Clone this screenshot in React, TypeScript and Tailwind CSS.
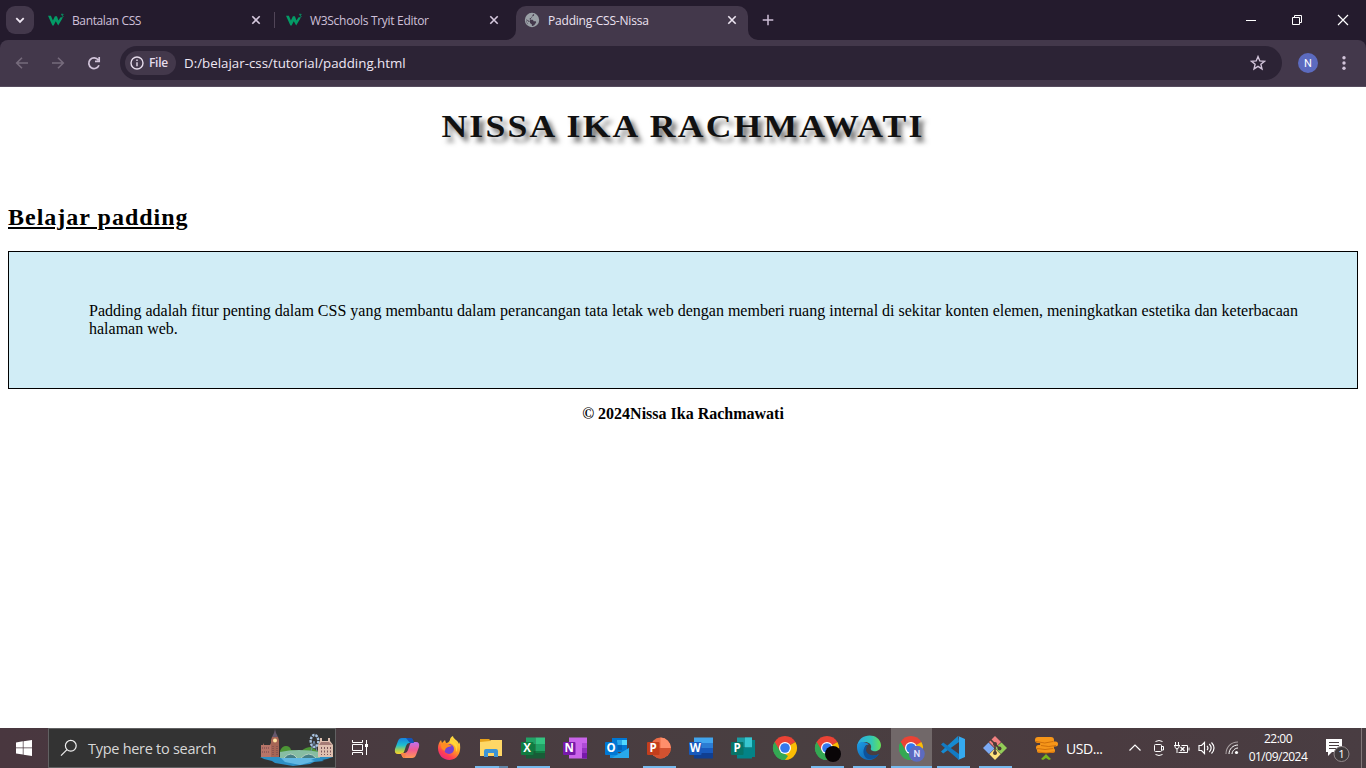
import React from "react";

function W3Icon() {
  return (
    <svg width="16" height="16" viewBox="0 0 16 16" className="shrink-0">
      <path d="M0 3.8h2.9l2 4.6 2-4.1 2 0 1.6 4.2 2-3.2 2 1-4.3 7.2-2.4-4.2-2.2 4.2H4.4z" fill="#049b66" />
      <path d="M13 2.3h2.2l-1.2 1.3c1.7.1 1.6 2.2-.8 1.9" fill="none" stroke="#049b66" strokeWidth=".9" />
    </svg>
  );
}

function Cross({ color }: { color: string }) {
  return (
    <svg width="16" height="16" viewBox="0 0 16 16" className="shrink-0">
      <path d="M4.3 4.3 11.7 11.7M11.7 4.3 4.3 11.7" stroke={color} strokeWidth="1.6" />
    </svg>
  );
}

function TabStrip() {
  return (
    <div className="flex h-10 w-full bg-[#241b2d] pl-1.5">
      <div className="mt-1.5 flex size-7 shrink-0 items-center justify-center rounded-[9px] bg-[#43384b]">
        <svg width="12" height="12" viewBox="0 0 12 12"><path d="m2.3 4.2 3.7 3.7 3.7-3.7" fill="none" stroke="#f0e8f4" strokeWidth="1.8" /></svg>
      </div>
      <div className="flex w-[240px] shrink-0 items-center pl-[14px] pr-[10px]">
        <W3Icon />
        <span className="ml-2 flex-1 pt-0.5 whitespace-nowrap text-[12px] tracking-[-0.38px] text-[#cfc0d9]">Bantalan CSS</span>
        <Cross color="#d6c9de" />
      </div>
      <div className="mt-3 h-4 w-px bg-[#514558]" />
      <div className="flex w-[238px] shrink-0 items-center pl-[11px] pr-[11px]">
        <W3Icon />
        <span className="ml-2 flex-1 pt-0.5 whitespace-nowrap text-[12px] tracking-[-0.3px] text-[#cfc0d9]">W3Schools Tryit Editor</span>
        <Cross color="#d6c9de" />
      </div>
      <div className="relative ml-[3px] mt-1.5 flex h-[34px] w-[232px] shrink-0 items-center rounded-t-[10px] bg-[#43384b] pb-[6px] pl-2 pr-2">
        <svg className="absolute -left-[10px] bottom-0" width="10" height="10"><path d="M10 0v10H0A10 10 0 0 0 10 0" fill="#43384b" /></svg>
        <svg className="absolute -right-[10px] bottom-0" width="10" height="10"><path d="M0 0v10h10A10 10 0 0 1 0 0" fill="#43384b" /></svg>
        <svg width="16" height="16" viewBox="0 0 16 16" className="shrink-0">
          <circle cx="8" cy="8" r="7.2" fill="#9aa0a6" />
          <path d="M9.2 2.1q1.700.6.6 1.7l-1.700.7-.2 1.600H5.800v1.600h2.700q1 0 1 1.600h1.600q1.200-.2 1 1.200l-1.700 2.400q-1.500 1.300-2.500 1.100v-1.500L6 11V9.600L2.200 7.200q-.4 3 1.800 5" fill="#43384b" />
          <path d="M2.3 7.5q0 4 3.6 5.4V11z" fill="#9aa0a6" />
        </svg>
        <span className="ml-2 flex-1 pt-0.5 whitespace-nowrap text-[12px] tracking-[-0.2px] text-[#ebe1f0]">Padding-CSS-Nissa</span>
        <Cross color="#ede5f1" />
      </div>
      <svg width="16" height="16" viewBox="0 0 16 16" className="ml-3 mt-3"><path d="M8 2.7v10.6M2.7 8h10.6" stroke="#cdbfd6" strokeWidth="1.5" /></svg>
      <div className="ml-auto flex h-10 items-center">
        <div className="flex w-[46px] justify-center"><svg width="12" height="12"><path d="M1 6.5h10" stroke="#fff" /></svg></div>
        <div className="flex w-[46px] justify-center"><svg width="12" height="12"><path d="M1.5 3.5h7v7h-7zM3.5 3.5v-2h7v7h-2" fill="none" stroke="#fff" /></svg></div>
        <div className="flex w-[46px] justify-center"><svg width="12" height="12"><path d="m1 1 10 10M11 1 1 11" stroke="#fff" strokeWidth="1.2" /></svg></div>
      </div>
    </div>
  );
}

function Toolbar() {
  return (
    <div className="w-full bg-[#241b2d]">
      <div className="flex h-[47px] items-center rounded-t-[8px] border-b border-[#564c5e] bg-[#43384b] pl-[14px]">
        <svg width="16" height="16" viewBox="0 0 16 16"><path d="M14 8H3M8 2.7 2.7 8 8 13.3" fill="none" stroke="#766b7c" strokeWidth="1.6" /></svg>
        <svg width="16" height="16" viewBox="0 0 16 16" className="ml-5"><path d="M2 8h11M8 2.7 13.3 8 8 13.3" fill="none" stroke="#766b7c" strokeWidth="1.6" /></svg>
        <svg width="16" height="16" viewBox="0 0 16 16" className="ml-5"><path d="M13 10.2A5.3 5.3 0 1 1 12.3 5M13.2 2v4.3H9" fill="none" stroke="#d2c4da" strokeWidth="1.7" /></svg>
        <div className="ml-[18px] flex h-[34px] w-[1162px] items-center rounded-full bg-[#2c2335] pl-[5px] pr-4">
          <div className="flex h-6 w-[51px] items-center rounded-full bg-[#43384b] pl-[5px]">
            <svg width="14" height="14" viewBox="0 0 14 14"><circle cx="7" cy="7" r="6" fill="none" stroke="#e6dceb" strokeWidth="1.4" /><path d="M7 6.2v4M7 3.5v1.5" stroke="#e6dceb" strokeWidth="1.4" /></svg>
            <span className="ml-[5px] text-[12px] font-semibold tracking-[-0.3px] text-[#e6dceb]">File</span>
          </div>
          <span className="ml-2 flex-1 pt-px whitespace-nowrap text-[13.3px] tracking-[0.01px] text-[#efe7f4]">D:/belajar-css/tutorial/padding.html</span>
          <svg width="16" height="16" viewBox="0 0 16 16"><path d="m8 1.6 1.8 4.3 4.7.4-3.6 3 1.1 4.6L8 11.4l-4 2.5 1.1-4.6-3.6-3 4.7-.4z" fill="none" stroke="#d2c4da" strokeWidth="1.4" /></svg>
        </div>
        <div className="ml-4 flex size-5 items-center justify-center rounded-full bg-[#5c6bc0] pt-px font-['Roboto'] text-[11px] leading-none font-normal text-white">N</div>
        <svg width="16" height="16" viewBox="0 0 16 16" className="ml-[18px]" fill="#d2c4da"><circle cx="8" cy="2.8" r="1.7" /><circle cx="8" cy="8" r="1.7" /><circle cx="8" cy="13.2" r="1.7" /></svg>
      </div>
    </div>
  );
}

function Page() {
  return (
    <main className="flex h-[641px] flex-col bg-white px-2 font-['Liberation_Serif',serif] text-black">
      <h1 className="mt-[21px] scale-x-[1.113] text-center text-[32px] leading-[37px] font-bold tracking-[2px] whitespace-nowrap text-[#111] [text-shadow:4px_5px_5px_#707070]">NISSA IKA RACHMAWATI</h1>
      <h2 className="mt-[59px] text-[24px] leading-[27px] font-bold tracking-[1px] underline">Belajar padding</h2>
      <p className="mt-5 h-[138px] border border-black bg-[#d1edf6] pt-[50px] pr-[50px] pb-[50px] pl-[80px] text-[16px] leading-[18px]">
        Padding adalah fitur penting dalam CSS yang membantu dalam perancangan tata letak web dengan memberi ruang internal di sekitar konten elemen, meningkatkan estetika dan keterbacaan halaman web.
      </p>
      <p className="mt-4 text-center text-[16px] leading-[18px] font-bold">© 2024Nissa Ika Rachmawati</p>
    </main>
  );
}

function LondonArt() {
  return (
    <svg width="74" height="38" viewBox="0 0 74 38" className="mr-px shrink-0">
      <path d="M0 28h73l-6 2-5 1 2 1-10 1-4 2-17 2-18-3-3-2-8-2z" fill="#2c8fc5" />
      <path d="M20 28h38l-7 3 4 1-15 4-15-3z" fill="#62b8e3" />
      <path d="M20 22q2-5 6-5t5 4l10 1q5-4 10-4l7 4v6H20z" fill="#4c9535" />
      <path d="M20 23q18-4 40 0v6H20z" fill="#87bda3" />
      <path d="M24 29q7-8 13 0M41 29q8-8 15 0" fill="#467f85" stroke="#b5d1c1" />
      <path d="M1 16h2v-2l1 2h6v-2l1 2h3v12H1z" fill="#b77568" />
      <path d="M11 11l1-3h6l1 3v17h-8z" fill="#a66555" />
      <path d="M12 8l2-4 1-4 1 4 2 4z" fill="#66586d" />
      <path d="M2 19h8M2 23h8M13 17v9M17 17v9" stroke="#71444c" strokeDasharray="1 1" />
      <circle cx="15" cy="11.5" r="2" fill="#ffe3a1" />
      <ellipse cx="54.5" cy="12" rx="3.8" ry="6" fill="none" stroke="#a8c4e1" strokeWidth="2.4" strokeDasharray="2.4 1" />
      <path d="M54 12l-3 10M54 12l3 10" stroke="#708baa" />
      <path d="M58 16l2-4h10l3 4v12H58z" fill="#dec0b0" />
      <path d="M59 16h13l-3-3h-8z" fill="#a47c76" />
      <path d="M61.500 18v8M64.500 18v8M67.500 18v8M70.500 18v8" stroke="#7c575b" strokeDasharray="2 1.5" />
      <path d="M61 13v-4M69 13v-4" stroke="#dec0b0" strokeWidth="2" />
    </svg>
  );
}

function OfficeIcon({ letter, dark, colors }: { letter: string; dark: string; colors: string[] }) {
  return (
    <svg width="24" height="24" viewBox="0 0 24 24">
      {letter === "P" && dark === "#c43e1c" ? (
        <g><circle cx="13.5" cy="12" r="10.4" fill={colors[0]} /><path d="M13.5 1.6A10.4 10.4 0 0 1 23.9 12H13.5z" fill={colors[1]} /><path d="M3.1 12h20.8a10.4 10.4 0 0 1-20.8 0" fill={colors[2]} /></g>
      ) : letter === "O" ? (
        <g><path d="M7 2h15v14H7z" fill={colors[0]} /><path d="M12 4h5v5h-5z" fill={colors[1]} /><path d="M17 4h5v5h-5z" fill="#50d9ff" /><path d="M12 9h5v5h-5z" fill="#0364b8" /><path d="m5 12 9.5 5.5L24 12v10H5z" fill={colors[2]} /><path d="m24 12-17 10h17z" fill="#28a8ea" /></g>
      ) : letter === "N" ? (
        <g><path d="M6 1.5h18v21H6z" fill={colors[0]} /><path d="M19 7h5v5h-5z" fill={colors[1]} /><path d="M19 12h5v5h-5z" fill={colors[2]} /><path d="M19 17h5v5.5h-5z" fill="#7719aa" /></g>
      ) : letter === "X" ? (
        <g><path d="M5 1.5h9.5V8H5z" fill="#21a366" /><path d="M14.5 1.5H24V8h-9.5z" fill="#33c481" /><path d="M5 8h9.5v7H5z" fill="#107c41" /><path d="M14.5 8H24v7h-9.5z" fill="#21a366" /><path d="M5 15h19v7.5H5z" fill="#185c37" /><path d="M14.5 15H24v2h-9.5z" fill="#107c41" /></g>
      ) : letter === "W" ? (
        <g><path d="M5 1.5h19v5.5H5z" fill={colors[0]} /><path d="M5 7h19v5H5z" fill={colors[1]} /><path d="M5 12h19v5H5z" fill={colors[2]} /><path d="M5 17h19v5.5H5z" fill="#103f91" /></g>
      ) : (
        <g><path d="M6 1.5h15v10H6z" fill={colors[0]} /><path d="M14 1.5h7v10h-7z" fill={colors[1]} /><path d="M6 11.5h15v11H6z" fill={colors[2]} /><path d="M21 4h3v17h-3z" fill="#038387" /></g>
      )}
      <rect x="0" y="6" width="12.5" height="13" rx="1" fill={dark} />
      <text x="6.2" y="16.3" textAnchor="middle" fontFamily="Open Sans" fontWeight="700" fontSize="11.5" fill="#fff">{letter}</text>
    </svg>
  );
}

function ChromeIcon({ badge }: { badge?: "black" | "n" }) {
  return (
    <svg width="28" height="28" viewBox="-14 -14 28 28">
      <path d="M0 0-10.4-6A12 12 0 0 1 10.4-6z" fill="#ea4335" />
      <path d="M0 0 10.4-6A12 12 0 0 1 0 12z" fill="#fbbc04" />
      <path d="M0 0 0 12A12 12 0 0 1-10.4-6z" fill="#34a853" />
      <path d="M0-6h10.4H-2zM5.2 3 0 12-1 6z" fill="#fbbc04" />
      <path d="M-10.4-6-5.2 3 0 0v-6z" fill="#ea4335" />
      <path d="M-10.4-6-5.2 3A6 6 0 0 0 0 6L3 8 0 12A12 12 0 0 1-10.4-6" fill="#34a853" />
      <circle r="6" fill="#fff" /><circle r="4.8" fill="#3478ed" />
      {badge === "black" && <circle cx="6" cy="6" r="8" fill="#090507" />}
      {badge === "n" && <g><circle cx="5.8" cy="5.8" r="8" fill="#5c6bc0" /><text x="5.8" y="9.2" textAnchor="middle" fontFamily="Roboto" fontSize="9.5" fontWeight="500" fill="#e8eaff">N</text></g>}
    </svg>
  );
}

function Slot({ children, bar, active, split }: { children: React.ReactNode; bar?: boolean; active?: boolean; split?: boolean }) {
  return (
    <div className="flex h-10 w-[42px] shrink-0 justify-center">
      <div className={active ? "relative flex h-10 w-[41px] items-center justify-center bg-[#716869]" : "relative flex h-10 w-[33px] items-center justify-center"}>
        {children}
        {bar && <div className="absolute bottom-0 left-0 h-0.5 w-full bg-[#76b9ed]" />}
        {split && <div className="absolute right-0 bottom-0 h-0.5 w-[9px] bg-[#5f86a8]" />}
      </div>
    </div>
  );
}

function Copilot() {
  return (
    <svg width="26" height="24" viewBox="0 0 26 24">
      <defs>
        <linearGradient id="ca" x1="0" y1="0" x2="0" y2="1"><stop stopColor="#1682df" /><stop offset=".45" stopColor="#1ebed0" /><stop offset=".75" stopColor="#a5cf55" /><stop offset="1" stopColor="#ffd229" /></linearGradient>
        <linearGradient id="cb" x1="0" y1="0" x2="0" y2="1"><stop stopColor="#bd70f1" /><stop offset=".5" stopColor="#f25b91" /><stop offset="1" stopColor="#ff9954" /></linearGradient>
      </defs>
      <path d="M8 2h8q2 0 3 5h-4q-2 0-3 3l-2 6q-1 2-3 2H4q-4 0-3-5l3-8q1-3 4-3" fill="url(#ca)" />
      <path d="M18 22h-8q-2 0-3-5h4q2 0 3-3l2-6q1-2 3-2h3q4 0 3 5l-3 8q-1 3-4 3" fill="url(#cb)" />
      <path d="M12 2h5q2 0 3 5h-4z" fill="#1454b8" />
      <path d="M7 17h5l-1 5q-3 0-4-5" fill="#f88347" />
    </svg>
  );
}

function Firefox() {
  return (
    <svg width="24" height="24" viewBox="0 0 24 24">
      <defs><linearGradient id="ff" x1=".8" y1="0" x2=".2" y2="1"><stop stopColor="#fff14a" /><stop offset=".45" stopColor="#ff9d22" /><stop offset=".75" stopColor="#ff4052" /><stop offset="1" stopColor="#e82087" /></linearGradient></defs>
      <path d="M1 12c0-3 1-6 3-8l1 3 3-3 1 3c2 0 3-1 4-3 0-2 1-3 3-4 0 3 5 4 6 8l.5-2c2 8 0 17-10 18C6 24 1 19 1 12" fill="url(#ff)" />
      <circle cx="12" cy="13" r="5" fill="#7542d2" />
      <path d="M4 8q4-2 7 0l4 2-4 1q-3 1-3 4-5-2-4-7" fill="#ff8b23" />
      <path d="M13 7q7 2 6 9 3-5-1-10l-5-3z" fill="#ffd63a" />
    </svg>
  );
}

function Explorer() {
  return (
    <svg width="24" height="22" viewBox="0 0 24 22">
      <path d="M1 2h9l2 2v3H1z" fill="#e7a21a" /><path d="M1 5l10-1 1-1h11v16H1z" fill="#ffd766" />
      <path d="M5 20v-6q0-2 2-2h10q2 0 2 2v6h-4v-4H9v4z" fill="#3c94d6" />
    </svg>
  );
}

function Edge() {
  return (
    <svg width="26" height="26" viewBox="0 0 26 26">
      <defs>
        <linearGradient id="ea"><stop stopColor="#2aa9e9" /><stop offset=".6" stopColor="#32c7b5" /><stop offset="1" stopColor="#67e056" /></linearGradient>
        <linearGradient id="eb" x1="0" y1="0" x2="1" y2="1"><stop stopColor="#1b9ce5" /><stop offset="1" stopColor="#1057a3" /></linearGradient>
      </defs>
      <path d="M1 12C2-3 24-3 25 10c0 5-4 7-8 6q-3-1-2-3c1-4-3-6-6-6-4 0-7 2-8 5" fill="url(#ea)" />
      <path d="M1 12c0-5 8-7 12-2-4-1-5 3-4 6 2 5 8 6 14 3-3 4-6 6-10 6C6 25 1 19 1 12" fill="url(#eb)" />
      <path d="M12 10c-8 3-4 15 2 14 4 0 7-2 9-5-6 3-12 1-13-4q0-3 2-5" fill="#0d529b" />
    </svg>
  );
}

function VsCode() {
  return (
    <svg width="26" height="26" viewBox="0 0 26 26">
      <path d="M19 7 3.2 18.6 1 16.5 18 1z" fill="#168bd2" />
      <path d="M1 9.5 3.2 7.4 19 19v6z" fill="#127bc3" />
      <path d="m18 1 7 3v18l-7 3 1-1V2z" fill="#35aaf0" />
    </svg>
  );
}

function GitIcon() {
  return (
    <svg width="26" height="26" viewBox="0 0 26 26">
      <path d="M13 1l6 6-6 6-6-6z" fill="#f08080" />
      <path d="M6.5 7.5l6 6-5.5 5.5-6-6z" fill="#7caaf4" />
      <path d="M19.5 7.5l5.5 5.5-6 6-6-6z" fill="#93cd58" />
      <path d="M13 13.5l5.7 5.7-5.7 5.8-5.7-5.8z" fill="#ffe17b" />
      <path d="M8.5 4.5 13 9v10M13 9l4.5 4.5" fill="none" stroke="#4b3b36" strokeWidth="1.6" />
      <circle cx="13" cy="9" r="2" fill="#4b3b36" /><circle cx="17.5" cy="13.5" r="2" fill="#4b3b36" /><circle cx="13" cy="18" r="2" fill="#4b3b36" />
    </svg>
  );
}

function Tray() {
  return (
    <>
      <svg className="ml-[17px] shrink-0" width="26" height="26" viewBox="0 0 26 26">
        <path d="m8 24 5-5 5 5-2 1-3-2-3 2z" fill="#79b51c" />
        <g fill="#f69619"><rect x="4" y="13" width="18" height="5" rx="2.5" /><rect x="3" y="10" width="18" height="5" rx="2.5" /><rect x="7" y="6.500" width="18" height="5" rx="2.5" /><rect x="2" y="2" width="19" height="6" rx="3" /></g>
        <path d="M3 6.500q9 3 17 0M8 10.500q8 2 15 0M4 13.500q8 2 16 0M5 17q8 2 16 0" stroke="#cb6b09" fill="none" strokeWidth=".9" />
      </svg>
      <span className="ml-[7px] w-[38px] shrink-0 text-[14px] tracking-[-0.45px] whitespace-nowrap">USD...</span>
      <svg className="ml-6 shrink-0" width="14" height="14"><path d="m1.5 9.5 5.5-5.5 5.5 5.5" fill="none" stroke="#fff" strokeWidth="1.2" /></svg>
      <svg className="ml-[10px] shrink-0" width="14" height="18" fill="none" stroke="#fff"><path d="M3.5 2.5Q7 .5 10.5 2.5M3.5 15.5Q7 17.5 10.5 15.5" /><rect x="2.5" y="5.5" width="7" height="7" rx="1" /><path d="M9.5 7.500h2v3.500h-2" /></svg>
      <svg className="ml-[8px] shrink-0" width="16" height="14" fill="none" stroke="#fff"><path d="M1.500 1v3M4.500 1v3M0 4.500h6M1 4.500v2l2 1.500 2-1.500v-2M3 8v4M7.500 4.500h6v7H4.500M15 6.500v3" /><path d="m6.500 6 4 4M10.500 6l-4 4" strokeWidth="1.3" /></svg>
      <svg className="ml-2 shrink-0" width="17" height="16" fill="none" stroke="#fff"><path d="M1 5.5h2.5l3-3v11l-3-3H1zM9 6q2 2 0 4M11.3 4q3.7 4 0 8M13.500 2.500q5 5.500 0 11" strokeWidth="1.15" /></svg>
      <svg className="ml-[10px] shrink-0" width="14" height="16" fill="none"><path d="M1 14C1 7 6 2 13 2" stroke="#aaa1a3" strokeWidth="1.1" /><path d="M4 14c0-5 4-9 9-9M7 14c0-3 3-6 6-6" stroke="#fff" /><circle cx="11.500" cy="12.500" r="1.600" fill="#fff" /></svg>
      <div className="ml-2 w-[62px] shrink-0 text-center text-[12px] leading-[18px] tracking-[-0.5px]"><div>22:00</div><div>01/09/2024</div></div>
      <svg className="ml-4 shrink-0" width="26" height="28" viewBox="0 0 26 28"><path d="M1 5h16v13H7l-4 4v-4H1z" fill="#fff" /><path d="M4 8.5h10M4 11.5h10M4 14.5h7" stroke="#493d40" /><circle cx="16.5" cy="20" r="7.5" fill="#3f393b" stroke="#948b8d" /><text x="16.5" y="24" textAnchor="middle" fontFamily="Open Sans" fontSize="11.5" fill="#fff">1</text></svg>
    </>
  );
}

function Taskbar() {
  return (
    <footer className="flex h-10 items-center bg-[linear-gradient(90deg,#49373f,#493b40_30%,#493f41_58%,#4a3b40_80%,#493d42)] text-white">
      <div className="flex w-12 shrink-0 justify-center"><svg width="16" height="16" fill="#fff"><path d="M0 2.4 6.8 1.3v6.2H0zM7.5 1.2 16 0v7.5H7.5zM0 8.2h6.8v6.3L0 13.6zM7.5 8.2H16V16l-8.5-1.3z" /></svg></div>
      <div className="flex h-10 w-[288px] shrink-0 items-center border border-[#616162] bg-[#333] pl-[11px]">
        <svg width="18" height="18" fill="none" stroke="#eee" strokeWidth="1.2"><circle cx="10.8" cy="6.8" r="5.4" /><path d="m7 10.7-6 6" /></svg>
        <span className="ml-[10px] flex-1 pt-px text-[14.5px] tracking-[-0.28px] whitespace-nowrap text-[#d8d8d8]">Type here to search</span>
        <LondonArt />
      </div>
      <div className="flex w-[50px] shrink-0 justify-center"><svg width="18" height="18" className="-translate-x-px" fill="none" stroke="#fff"><path d="M1.5 1v2.5h10V1M1.5 5.5h10v6h-10zM1.5 16v-2.5h10V16M15.5 1v15" /><path d="M14 5h3v3h-3z" fill="#fff" stroke="none" /></svg></div>
      <Slot><Copilot /></Slot>
      <Slot><Firefox /></Slot>
      <Slot bar split><Explorer /></Slot>
      <Slot bar><OfficeIcon letter="X" dark="#107c41" colors={[]} /></Slot>
      <Slot><OfficeIcon letter="N" dark="#7719aa" colors={["#ca64ea", "#ae4bd5", "#9332bf"]} /></Slot>
      <Slot><OfficeIcon letter="O" dark="#0078d4" colors={["#0078d4", "#28a8ea", "#1490df"]} /></Slot>
      <Slot bar><OfficeIcon letter="P" dark="#c43e1c" colors={["#ed6c47", "#ff8f6b", "#d35230"]} /></Slot>
      <Slot><OfficeIcon letter="W" dark="#185abd" colors={["#41a5ee", "#2b7cd3", "#185abd"]} /></Slot>
      <Slot><OfficeIcon letter="P" dark="#077568" colors={["#1a9ba1", "#37c6d0", "#038387"]} /></Slot>
      <Slot><ChromeIcon /></Slot>
      <Slot bar><ChromeIcon badge="black" /></Slot>
      <Slot bar><Edge /></Slot>
      <Slot bar active><ChromeIcon badge="n" /></Slot>
      <Slot bar><VsCode /></Slot>
      <Slot bar><GitIcon /></Slot>
      <Tray />
      <div className="ml-auto mr-[4px] h-10 w-px bg-[#827779]" />
    </footer>
  );
}

export default function App() {
  return (
    <div className="flex h-[768px] w-[1366px] flex-col overflow-hidden font-['Open_Sans','Noto_Sans',sans-serif]">
      <TabStrip />
      <Toolbar />
      <Page />
      <Taskbar />
    </div>
  );
}
